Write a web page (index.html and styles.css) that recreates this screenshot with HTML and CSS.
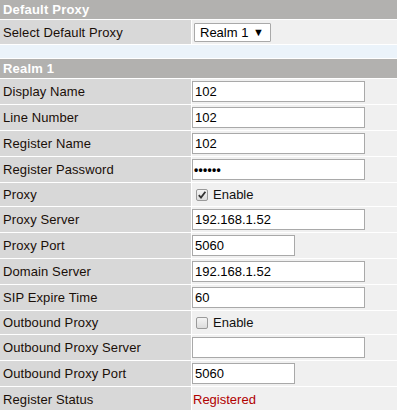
FILE: index.html
```html
<!DOCTYPE html>
<html>
<head>
<meta charset="utf-8">
<link rel="stylesheet" href="styles.css">
</head>
<body>
<div class="page">
  <div class="hdr">Default Proxy</div>
  <div class="row h24">
    <div class="lbl">Select Default Proxy</div>
    <div class="val"><div class="select"><span class="sel-text">Realm 1</span><span class="sel-arrow">▼</span></div></div>
  </div>
  <div class="spacer"></div>
  <div class="hdr">Realm 1</div>
  <div class="row h25"><div class="lbl">Display Name</div><div class="val"><input class="txt long" type="text" value="102"></div></div>
  <div class="row h25"><div class="lbl">Line Number</div><div class="val"><input class="txt long" type="text" value="102"></div></div>
  <div class="row h25"><div class="lbl">Register Name</div><div class="val"><input class="txt long" type="text" value="102"></div></div>
  <div class="row h25"><div class="lbl">Register Password</div><div class="val"><input class="txt long pwd" type="text" value="••••••"></div></div>
  <div class="row h23"><div class="lbl">Proxy</div><div class="val"><span class="cb checked"><svg width="10" height="10" viewBox="0 0 10 10"><path d="M1.8 5.2 L4 7.6 L8.4 1.8" fill="none" stroke="#333" stroke-width="1.8"/></svg></span><span class="cb-label">Enable</span></div></div>
  <div class="row h25"><div class="lbl">Proxy Server</div><div class="val"><input class="txt long" type="text" value="192.168.1.52"></div></div>
  <div class="row h25"><div class="lbl">Proxy Port</div><div class="val"><input class="txt short" type="text" value="5060"></div></div>
  <div class="row h25"><div class="lbl">Domain Server</div><div class="val"><input class="txt long" type="text" value="192.168.1.52"></div></div>
  <div class="row h25"><div class="lbl">SIP Expire Time</div><div class="val"><input class="txt long" type="text" value="60"></div></div>
  <div class="row h23"><div class="lbl">Outbound Proxy</div><div class="val"><span class="cb"></span><span class="cb-label">Enable</span></div></div>
  <div class="row h25"><div class="lbl">Outbound Proxy Server</div><div class="val"><input class="txt long" type="text" value=""></div></div>
  <div class="row h25"><div class="lbl">Outbound Proxy Port</div><div class="val"><input class="txt short" type="text" value="5060"></div></div>
  <div class="row h24"><div class="lbl">Register Status</div><div class="val"><span class="status">Registered</span></div></div>
</div>
</body>
</html>
```

FILE: styles.css
```css
html, body {
  margin: 0;
  padding: 0;
  background: #ffffff;
}
body {
  font-family: "Liberation Sans", Arial, sans-serif;
  font-size: 13px;
  color: #111;
}
.page {
  width: 397px;
}
.hdr {
  height: 19px;
  line-height: 19px;
  background: #b2b1af;
  color: #ffffff;
  font-weight: bold;
  padding-left: 3px;
  margin-bottom: 1px;
  letter-spacing: 0.2px;
}
.spacer {
  height: 13px;
  background: #ebf3fa;
  margin-bottom: 1px;
}
.row {
  display: grid;
  grid-template-columns: 191px 1fr;
  column-gap: 1px;
  margin-bottom: 1px;
}
.h23 { height: 23px; }
.h24 { height: 24px; }
.h25 { height: 25px; }
.lbl {
  background: #d8d8d8;
  padding-left: 3px;
  display: flex;
  align-items: center;
  color: #1a0f08;
  letter-spacing: 0.1px;
}
.val {
  background: #f0f0f0;
  display: flex;
  align-items: center;
}
.txt {
  box-sizing: border-box;
  height: 21px;
  margin: 0;
  border: 1px solid #a9a9a9;
  padding: 0 2px;
  font-family: "Liberation Sans", Arial, sans-serif;
  font-size: 13px;
  color: #000;
  background: #fff;
  outline: none;
}
.long { width: 173px; }
.short { width: 103px; }
.pwd {
  font-size: 12px;
  letter-spacing: 0.3px;
  font-weight: bold;
  padding-left: 1px;
}
.select {
  box-sizing: border-box;
  margin-left: 2px;
  width: 77px;
  height: 19px;
  border: 1px solid #a9a9a9;
  border-radius: 1px;
  background: #fff;
  display: flex;
  align-items: center;
  justify-content: space-between;
  padding: 0 6px 0 5px;
  color: #000;
}
.sel-arrow {
  font-size: 11px;
}
.cb {
  box-sizing: border-box;
  width: 12px;
  height: 12px;
  margin-left: 4px;
  border: 1px solid #9a9a9a;
  border-radius: 2px;
  background: linear-gradient(#f4f4f4, #dcdcdc);
  display: flex;
  align-items: center;
  justify-content: center;
}
.cb svg { display: block; }
.cb-label {
  margin-left: 5px;
  color: #111;
}
.status {
  color: #b00000;
  margin-left: 1px;
}
```
